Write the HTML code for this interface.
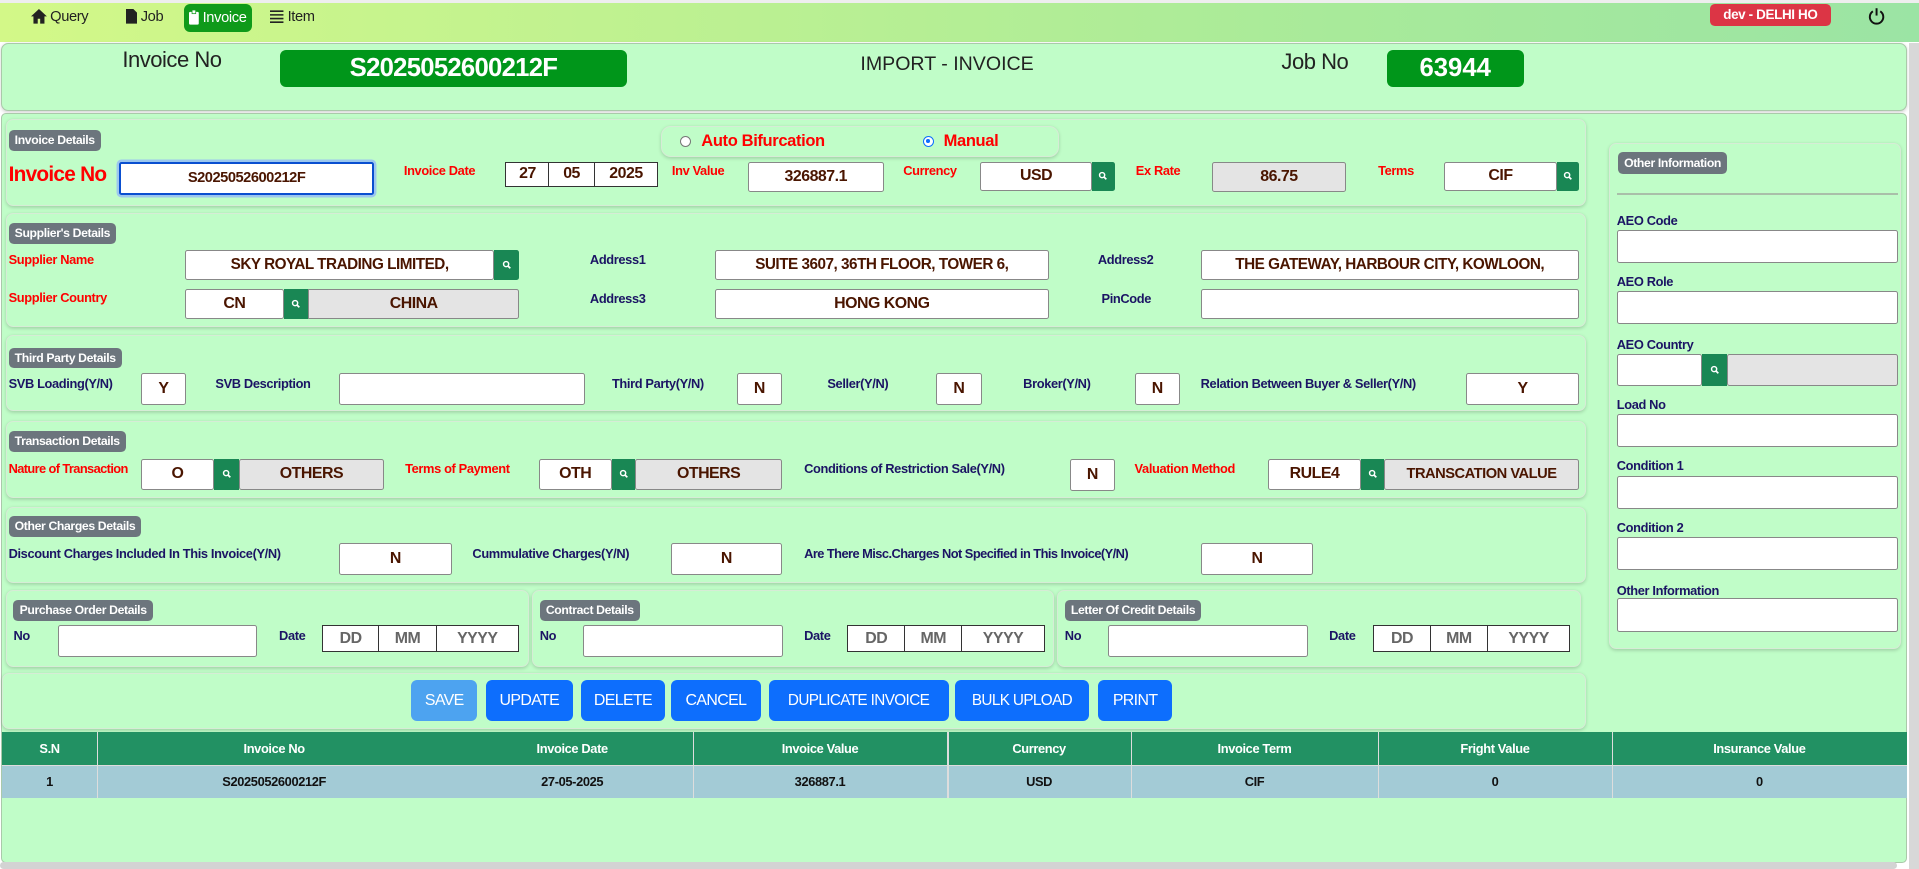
<!DOCTYPE html>
<html><head><meta charset="utf-8"><style>
html,body{margin:0;padding:0;width:1919px;height:869px;overflow:hidden;background:#fff}
#w{zoom:1.2239;position:relative;width:1568px;height:710px;font-family:"Liberation Sans Narrow","Liberation Sans",sans-serif;}
#w div,#w span{position:absolute;box-sizing:border-box}
.card{background:#c0fdc8;border:1px solid #d6ecd6;border-radius:6px;box-shadow:0 1px 3px rgba(0,0,0,.18)}
.bd{background:#6c757d;color:#fff;font-weight:bold;font-size:10px;letter-spacing:-.3px;border-radius:4px;padding:0 5px;height:17px;line-height:17px;white-space:nowrap}
.l{font-size:10.5px;letter-spacing:-.3px;font-weight:bold;color:#1b1464;white-space:nowrap}
.r{color:#f00}
.i{background:#fff;border:1px solid #888;border-radius:2px;text-align:center;font-weight:bold;font-size:13px;letter-spacing:-.4px;color:#4a1500;display:flex;align-items:center;justify-content:center;white-space:nowrap;overflow:hidden}
.g{background:#e4e4e4}
.s{background:#198754;border-radius:0 2px 2px 0;display:flex;align-items:center;justify-content:center}
.ph{color:#666}
.b{background:#0d6efd;color:#fff;font-size:13px;letter-spacing:-.5px;border-radius:5px;display:flex;align-items:center;justify-content:center;white-space:nowrap}
.th{color:#fff;font-weight:bold;font-size:10.5px;letter-spacing:-.3px;display:flex;align-items:center;justify-content:center;height:27px}
.td{color:#111;font-weight:bold;font-size:10.5px;letter-spacing:-.3px;display:flex;align-items:center;justify-content:center;height:27px}
</style></head><body><div id="w">
<svg width="0" height="0" style="position:absolute"><defs><symbol id="q" viewBox="0 0 10 10"><circle cx="4.2" cy="4.2" r="2.6" fill="none" stroke="#fff" stroke-width="1.5"/><path d="M6 6L8.5 8.5" stroke="#fff" stroke-width="1.8"/></symbol></defs></svg>
<div style="left:0;top:0;width:1568px;height:34px;background:linear-gradient(90deg,#d3f888,#a8ea9a 70%,#9be4a4);border-top:3px solid #eee"></div>
<div style="left:25px;top:7px;font-size:12px;letter-spacing:-.3px;color:#222;display:flex;align-items:center;gap:3px"><svg width="13" height="12" viewBox="0 0 13 12"><path d="M6.5 0L0 6h2v6h3.5V8h2v4H11V6h2z" fill="#222"/></svg>Query</div>
<div style="left:103px;top:7px;font-size:12px;letter-spacing:-.3px;color:#222;display:flex;align-items:center;gap:3px"><svg width="9" height="12" viewBox="0 0 9 12"><path d="M0 0h6l3 3v9H0z" fill="#222"/></svg>Job</div>
<div style="left:150px;top:3px;width:56px;height:23px;background:#0f9a1a;border-radius:5px;color:#fff;font-size:12px;letter-spacing:-.3px;display:flex;align-items:center;justify-content:center;gap:3px"><svg width="8" height="12" viewBox="0 0 8 12"><rect x="0" y="1.5" width="8" height="10.5" rx="1" fill="#fff"/><rect x="2.5" y="0" width="3" height="3" fill="#fff" stroke="#0f9a1a" stroke-width=".6"/></svg>Invoice</div>
<div style="left:221px;top:7px;font-size:12px;letter-spacing:-.3px;color:#222;display:flex;align-items:center;gap:3px"><svg width="11" height="11" viewBox="0 0 11 11"><path d="M0 1h11M0 4h11M0 7h11M0 10h11" stroke="#222" stroke-width="1.3"/></svg>Item</div>
<div style="left:1397px;top:3px;width:99px;height:18px;background:#dc3545;border-radius:4px;color:#fff;font-weight:bold;font-size:11px;letter-spacing:-.3px;display:flex;align-items:center;justify-content:center">dev - DELHI HO</div>
<div style="left:1526px;top:6px"><svg width="14" height="15" viewBox="0 0 14 15"><path d="M4 3.5A5.5 5.5 0 1 0 10 3.5" fill="none" stroke="#111" stroke-width="1.6"/><path d="M7 1v6" stroke="#111" stroke-width="1.6"/></svg></div>
<div class="card" style="left:1px;top:35px;width:1557px;height:56px;border-color:#aac9aa"></div>
<div style="left:100px;top:38px;font-size:18px;letter-spacing:-.4px;color:#222">Invoice No</div>
<div style="left:229px;top:41px;width:283px;height:30px;background:#00961a;border-radius:5px;color:#fff;font-weight:bold;font-size:21px;letter-spacing:-.6px;display:flex;align-items:center;justify-content:center">S2025052600212F</div>
<div style="left:703px;top:43px;font-size:16px;color:#222;font-family:'Liberation Sans',sans-serif">IMPORT - INVOICE</div>
<div style="left:1047px;top:40px;font-size:18px;letter-spacing:-.4px;color:#222">Job No</div>
<div style="left:1133px;top:41px;width:112px;height:30px;background:#00961a;border-radius:5px;color:#fff;font-weight:bold;font-size:21px;display:flex;align-items:center;justify-content:center">63944</div>
<div style="left:1px;top:92px;width:1557px;height:613px;background:#c0fdc8;border:1px solid #aac9aa;border-radius:4px"></div>
<div style="left:1560px;top:35px;width:8px;height:675px;background:#d8d8d8"></div>
<div style="left:0;top:704px;width:1550px;height:6px;background:#d3d3d3;border-radius:3px"></div>
<div class="card" style="left:5px;top:97px;width:1291px;height:71px"></div>
<div class="bd" style="left:7px;top:106px">Invoice Details</div>
<div class="card" style="left:540px;top:103px;width:325px;height:25px;border-radius:8px"></div>
<div style="left:556px;top:111px;width:9px;height:9px;border:1px solid #777;border-radius:50%;background:#fff"></div>
<div style="left:573px;top:107px;font-size:13.5px;letter-spacing:-.3px;font-weight:bold;color:#f00">Auto Bifurcation</div>
<div style="left:754px;top:111px;width:9px;height:9px;border:1px solid #0d6efd;border-radius:50%;background:#fff"><span style="left:2px;top:2px;width:3px;height:3px;border-radius:50%;background:#0d6efd"></span></div>
<div style="left:771px;top:107px;font-size:13.5px;letter-spacing:-.3px;font-weight:bold;color:#f00">Manual</div>
<div class="l r" style="left:7px;top:133px;font-size:17px;letter-spacing:-.6px">Invoice No</div>
<div class="i" style="left:97px;top:132px;width:209px;height:27px;border:2px solid #0a4fd0;box-shadow:0 0 0 2px #9cc7ee;font-size:12px">S2025052600212F</div>
<div class="l r" style="left:330px;top:133px">Invoice Date</div>
<div class="i" style="left:413px;top:132px;width:36px;height:21px;border-color:#333;border-radius:0">27</div>
<div class="i" style="left:448px;top:132px;width:38px;height:21px;border-color:#333;border-radius:0">05</div>
<div class="i" style="left:485px;top:132px;width:53px;height:21px;border-color:#333;border-radius:0">2025</div>
<div class="l r" style="left:549px;top:133px">Inv Value</div>
<div class="i" style="left:611px;top:132px;width:111px;height:25px">326887.1</div>
<div class="l r" style="left:738px;top:133px">Currency</div>
<div class="i" style="left:801px;top:132px;width:91px;height:24px">USD</div>
<div class="s" style="left:892px;top:132px;width:19px;height:24px"><svg width="8" height="8"><use href="#q"/></svg></div>
<div class="l r" style="left:928px;top:133px">Ex Rate</div>
<div class="i g" style="left:990px;top:132px;width:110px;height:25px">86.75</div>
<div class="l r" style="left:1126px;top:133px">Terms</div>
<div class="i" style="left:1180px;top:132px;width:92px;height:24px">CIF</div>
<div class="s" style="left:1272px;top:132px;width:18px;height:24px"><svg width="8" height="8"><use href="#q"/></svg></div>
<div class="card" style="left:5px;top:174px;width:1291px;height:93px"></div>
<div class="bd" style="left:7px;top:182px">Supplier's Details</div>
<div class="l r" style="left:7px;top:206px">Supplier Name</div>
<div class="i" style="left:151px;top:204px;width:253px;height:25px;font-size:12.5px">SKY ROYAL TRADING LIMITED,</div>
<div class="s" style="left:404px;top:204px;width:20px;height:25px"><svg width="8" height="8"><use href="#q"/></svg></div>
<div class="l" style="left:482px;top:206px">Address1</div>
<div class="i" style="left:584px;top:204px;width:273px;height:25px;font-size:12.5px">SUITE 3607, 36TH FLOOR, TOWER 6,</div>
<div class="l" style="left:897px;top:206px">Address2</div>
<div class="i" style="left:981px;top:204px;width:309px;height:25px;font-size:12.5px">THE GATEWAY, HARBOUR CITY, KOWLOON,</div>
<div class="l r" style="left:7px;top:237px">Supplier Country</div>
<div class="i" style="left:151px;top:236px;width:81px;height:25px">CN</div>
<div class="s" style="left:232px;top:236px;width:20px;height:25px;border-radius:0"><svg width="8" height="8"><use href="#q"/></svg></div>
<div class="i g" style="left:252px;top:236px;width:172px;height:25px;border-radius:0 2px 2px 0">CHINA</div>
<div class="l" style="left:482px;top:238px">Address3</div>
<div class="i" style="left:584px;top:236px;width:273px;height:25px">HONG KONG</div>
<div class="l" style="left:900px;top:238px">PinCode</div>
<div class="i" style="left:981px;top:236px;width:309px;height:25px"></div>
<div class="card" style="left:5px;top:274px;width:1291px;height:62px"></div>
<div class="bd" style="left:7px;top:284px">Third Party Details</div>
<div class="l" style="left:7px;top:307px">SVB Loading(Y/N)</div>
<div class="i" style="left:115px;top:305px;width:37px;height:26px">Y</div>
<div class="l" style="left:176px;top:307px">SVB Description</div>
<div class="i" style="left:277px;top:305px;width:201px;height:26px"></div>
<div class="l" style="left:500px;top:307px">Third Party(Y/N)</div>
<div class="i" style="left:602px;top:305px;width:37px;height:26px">N</div>
<div class="l" style="left:676px;top:307px">Seller(Y/N)</div>
<div class="i" style="left:765px;top:305px;width:37px;height:26px">N</div>
<div class="l" style="left:836px;top:307px">Broker(Y/N)</div>
<div class="i" style="left:927px;top:305px;width:37px;height:26px">N</div>
<div class="l" style="left:981px;top:307px">Relation Between Buyer &amp; Seller(Y/N)</div>
<div class="i" style="left:1198px;top:305px;width:92px;height:26px">Y</div>
<div class="card" style="left:5px;top:344px;width:1291px;height:63px"></div>
<div class="bd" style="left:7px;top:352px">Transaction Details</div>
<div class="l r" style="left:7px;top:377px;letter-spacing:-.5px">Nature of Transaction</div>
<div class="i" style="left:115px;top:375px;width:60px;height:25px">O</div>
<div class="s" style="left:175px;top:375px;width:20px;height:25px;border-radius:0"><svg width="8" height="8"><use href="#q"/></svg></div>
<div class="i g" style="left:195px;top:375px;width:119px;height:25px">OTHERS</div>
<div class="l r" style="left:331px;top:377px">Terms of Payment</div>
<div class="i" style="left:440px;top:375px;width:60px;height:25px">OTH</div>
<div class="s" style="left:500px;top:375px;width:19px;height:25px;border-radius:0"><svg width="8" height="8"><use href="#q"/></svg></div>
<div class="i g" style="left:519px;top:375px;width:120px;height:25px">OTHERS</div>
<div class="l" style="left:657px;top:377px">Conditions of Restriction Sale(Y/N)</div>
<div class="i" style="left:874px;top:375px;width:37px;height:26px">N</div>
<div class="l r" style="left:927px;top:377px">Valuation Method</div>
<div class="i" style="left:1036px;top:375px;width:76px;height:25px">RULE4</div>
<div class="s" style="left:1112px;top:375px;width:19px;height:25px;border-radius:0"><svg width="8" height="8"><use href="#q"/></svg></div>
<div class="i g" style="left:1131px;top:375px;width:159px;height:25px;font-size:12px">TRANSCATION VALUE</div>
<div class="card" style="left:5px;top:414px;width:1291px;height:62px"></div>
<div class="bd" style="left:7px;top:422px">Other Charges Details</div>
<div class="l" style="left:7px;top:446px">Discount Charges Included In This Invoice(Y/N)</div>
<div class="i" style="left:277px;top:444px;width:92px;height:26px">N</div>
<div class="l" style="left:386px;top:446px">Cummulative Charges(Y/N)</div>
<div class="i" style="left:548px;top:444px;width:91px;height:26px">N</div>
<div class="l" style="left:657px;top:446px;letter-spacing:-.45px">Are There Misc.Charges Not Specified in This Invoice(Y/N)</div>
<div class="i" style="left:981px;top:444px;width:92px;height:26px">N</div>
<div class="card" style="left:5px;top:482px;width:427px;height:63px"></div>
<div class="card" style="left:435px;top:482px;width:426px;height:63px"></div>
<div class="card" style="left:864px;top:482px;width:428px;height:63px"></div>
<div class="bd" style="left:11px;top:490px">Purchase Order Details</div>
<div class="bd" style="left:441px;top:490px">Contract Details</div>
<div class="bd" style="left:870px;top:490px">Letter Of Credit Details</div>
<div class="l" style="left:11px;top:513px">No</div><div class="i" style="left:47px;top:511px;width:163px;height:26px"></div>
<div class="l" style="left:228px;top:513px">Date</div>
<div class="i ph" style="left:263px;top:511px;width:47px;height:22px;border-color:#333;border-radius:0">DD</div><div class="i ph" style="left:309px;top:511px;width:48px;height:22px;border-color:#333;border-radius:0">MM</div><div class="i ph" style="left:356px;top:511px;width:68px;height:22px;border-color:#333;border-radius:0">YYYY</div>
<div class="l" style="left:441px;top:513px">No</div><div class="i" style="left:476px;top:511px;width:164px;height:26px"></div>
<div class="l" style="left:657px;top:513px">Date</div>
<div class="i ph" style="left:692px;top:511px;width:48px;height:22px;border-color:#333;border-radius:0">DD</div><div class="i ph" style="left:739px;top:511px;width:47px;height:22px;border-color:#333;border-radius:0">MM</div><div class="i ph" style="left:785px;top:511px;width:69px;height:22px;border-color:#333;border-radius:0">YYYY</div>
<div class="l" style="left:870px;top:513px">No</div><div class="i" style="left:905px;top:511px;width:164px;height:26px"></div>
<div class="l" style="left:1086px;top:513px">Date</div>
<div class="i ph" style="left:1122px;top:511px;width:47px;height:22px;border-color:#333;border-radius:0">DD</div><div class="i ph" style="left:1168px;top:511px;width:48px;height:22px;border-color:#333;border-radius:0">MM</div><div class="i ph" style="left:1215px;top:511px;width:68px;height:22px;border-color:#333;border-radius:0">YYYY</div>
<div class="card" style="left:2px;top:550px;width:1294px;height:46px"></div>
<div class="b" style="left:336px;top:556px;width:54px;height:33px;background:#4da3f0">SAVE</div>
<div class="b" style="left:397px;top:556px;width:71px;height:33px">UPDATE</div>
<div class="b" style="left:475px;top:556px;width:68px;height:33px">DELETE</div>
<div class="b" style="left:548px;top:556px;width:74px;height:33px">CANCEL</div>
<div class="b" style="left:628px;top:556px;width:147px;height:33px;font-size:12.5px">DUPLICATE INVOICE</div>
<div class="b" style="left:780px;top:556px;width:110px;height:33px;font-size:12.5px">BULK UPLOAD</div>
<div class="b" style="left:897px;top:556px;width:61px;height:33px">PRINT</div>
<div style="left:2px;top:598px;width:1556px;height:27px;background:#229163"></div>
<div style="left:2px;top:625px;width:1556px;height:27px;background:#a3cbd6;border-top:1px solid #ddd"></div>
<div style="left:79px;top:598px;width:1px;height:54px;background:#ddd"></div>
<div style="left:566px;top:598px;width:1px;height:54px;background:#ddd"></div>
<div style="left:774px;top:598px;width:1px;height:54px;background:#ddd"></div>
<div style="left:924px;top:598px;width:1px;height:54px;background:#ddd"></div>
<div style="left:1126px;top:598px;width:1px;height:54px;background:#ddd"></div>
<div style="left:1317px;top:598px;width:1px;height:54px;background:#ddd"></div>
<div class="th" style="left:2px;top:598px;width:77px">S.N</div>
<div class="th" style="left:79px;top:598px;width:290px">Invoice No</div>
<div class="th" style="left:369px;top:598px;width:197px">Invoice Date</div>
<div class="th" style="left:566px;top:598px;width:208px">Invoice Value</div>
<div class="th" style="left:774px;top:598px;width:150px">Currency</div>
<div class="th" style="left:924px;top:598px;width:202px">Invoice Term</div>
<div class="th" style="left:1126px;top:598px;width:191px">Fright Value</div>
<div class="th" style="left:1317px;top:598px;width:241px">Insurance Value</div>
<div class="td" style="left:2px;top:625px;width:77px">1</div>
<div class="td" style="left:79px;top:625px;width:290px">S2025052600212F</div>
<div class="td" style="left:369px;top:625px;width:197px">27-05-2025</div>
<div class="td" style="left:566px;top:625px;width:208px">326887.1</div>
<div class="td" style="left:774px;top:625px;width:150px">USD</div>
<div class="td" style="left:924px;top:625px;width:202px">CIF</div>
<div class="td" style="left:1126px;top:625px;width:191px">0</div>
<div class="td" style="left:1317px;top:625px;width:241px">0</div>
<div class="card" style="left:1315px;top:117px;width:238px;height:413px"></div>
<div class="bd" style="left:1322px;top:124px;height:18px;line-height:18px">Other Information</div>
<div style="left:1321px;top:158px;width:230px;height:1px;background:#a9bfa9"></div>
<div class="l" style="left:1321px;top:174px">AEO Code</div><div class="i" style="left:1321px;top:188px;width:230px;height:27px"></div>
<div class="l" style="left:1321px;top:224px">AEO Role</div><div class="i" style="left:1321px;top:238px;width:230px;height:27px"></div>
<div class="l" style="left:1321px;top:275px">AEO Country</div>
<div class="i" style="left:1321px;top:289px;width:70px;height:26px"></div>
<div class="s" style="left:1391px;top:289px;width:20px;height:26px;border-radius:0"><svg width="8" height="8"><use href="#q"/></svg></div>
<div class="i g" style="left:1411px;top:289px;width:140px;height:26px"></div>
<div class="l" style="left:1321px;top:324px">Load No</div><div class="i" style="left:1321px;top:338px;width:230px;height:27px"></div>
<div class="l" style="left:1321px;top:374px">Condition 1</div><div class="i" style="left:1321px;top:389px;width:230px;height:27px"></div>
<div class="l" style="left:1321px;top:425px">Condition 2</div><div class="i" style="left:1321px;top:439px;width:230px;height:27px"></div>
<div class="l" style="left:1321px;top:476px">Other Information</div><div class="i" style="left:1321px;top:489px;width:230px;height:27px"></div>
</div></body></html>
